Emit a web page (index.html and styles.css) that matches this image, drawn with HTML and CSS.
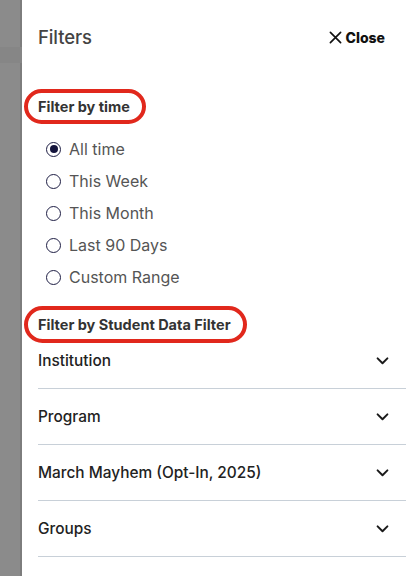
FILE: index.html
```html
<!DOCTYPE html>
<html>
<head>
<meta charset="utf-8">
<link rel="stylesheet" href="styles.css">
</head>
<body>
<div class="page">
  <div class="backdrop"><div class="band"></div></div>
  <aside class="panel">
    <header class="head">
      <h1 class="title">Filters</h1>
      <button class="close">
        <svg class="x" viewBox="0 0 14 14" width="13" height="13"><path d="M1.5 1.5 L12.5 12.5 M12.5 1.5 L1.5 12.5" stroke="#111" stroke-width="1.8" fill="none" stroke-linecap="round"/></svg>
        <span>Close</span>
      </button>
    </header>

    <div class="section-title first"><span>Filter by time</span></div>
    <ul class="radios">
      <li class="radio on"><span class="dot"></span>All time</li>
      <li class="radio"><span class="dot"></span>This Week</li>
      <li class="radio"><span class="dot"></span>This Month</li>
      <li class="radio"><span class="dot"></span>Last 90 Days</li>
      <li class="radio"><span class="dot"></span>Custom Range</li>
    </ul>

    <div class="section-title second"><span>Filter by Student Data Filter</span></div>
    <ul class="acc">
      <li class="acc-item"><span>Institution</span><svg class="chev" viewBox="0 0 14 9" width="13" height="8"><path d="M1.5 1.5 L7 7 L12.5 1.5" stroke="#1a1a1a" stroke-width="2.2" fill="none" stroke-linecap="round" stroke-linejoin="round"/></svg></li>
      <li class="acc-item"><span>Program</span><svg class="chev" viewBox="0 0 14 9" width="13" height="8"><path d="M1.5 1.5 L7 7 L12.5 1.5" stroke="#1a1a1a" stroke-width="2.2" fill="none" stroke-linecap="round" stroke-linejoin="round"/></svg></li>
      <li class="acc-item"><span>March Mayhem (Opt-In, 2025)</span><svg class="chev" viewBox="0 0 14 9" width="13" height="8"><path d="M1.5 1.5 L7 7 L12.5 1.5" stroke="#1a1a1a" stroke-width="2.2" fill="none" stroke-linecap="round" stroke-linejoin="round"/></svg></li>
      <li class="acc-item"><span>Groups</span><svg class="chev" viewBox="0 0 14 9" width="13" height="8"><path d="M1.5 1.5 L7 7 L12.5 1.5" stroke="#1a1a1a" stroke-width="2.2" fill="none" stroke-linecap="round" stroke-linejoin="round"/></svg></li>
    </ul>
  </aside>
</div>
</body>
</html>
```
FILE: styles.css
```css
html, body { margin: 0; padding: 0; }
body { font-family: "Inter", "Noto Sans", sans-serif; background: #fff; }
.page { display: flex; width: 416px; height: 576px; overflow: hidden; }
.backdrop {
  width: 22px; flex: none; background: #8b8b8b;
  padding-top: 47px; box-sizing: border-box;
  box-shadow: inset -2px 0 0 #7d7d7d;
}
.band { height: 16px; background: #868686; }
.panel { flex: 1; padding: 0 10px 0 16px; background: #fff; }
.head {
  height: 74px; display: flex; align-items: center; justify-content: space-between;
  padding-right: 21px;
}
.title { margin: 0; font-size: 18.5px; font-weight: 500; color: #444; letter-spacing: -0.1px; }
.close {
  display: flex; align-items: center; gap: 4px; border: 0; background: none; padding: 0;
  font-family: inherit; font-size: 14px; font-weight: 800; color: #111;
}
.section-title span {
  display: inline-block; margin-left: -14px;
  border: 4px solid #e1281c; border-radius: 20px;
  padding: 5px 12px 5px 10px; line-height: 17px;
  font-size: 14.5px; font-weight: 700; color: #333;
}
.section-title.first { margin-top: 15px; }
.radios { list-style: none; margin: 9px 0 13px; padding: 0; }
.radio {
  height: 32px; display: flex; align-items: center; gap: 8px;
  font-size: 16px; color: #555; padding-left: 8px;
}
.dot {
  width: 13px; height: 13px; border: 1.5px solid #1e1e44; border-radius: 50%;
  box-sizing: content-box; display: flex; align-items: center; justify-content: center;
}
.radio.on .dot::after {
  content: ""; width: 8px; height: 8px; border-radius: 50%; background: #14143c;
}
.section-title.second span { padding-top: 6px; padding-bottom: 6px; }
.section-title.second { margin-bottom: -10px; }
.acc { list-style: none; margin: 0; padding: 0; }
.acc-item {
  height: 55px; border-bottom: 1px solid #c8d0d8;
  display: flex; align-items: center; justify-content: space-between;
  padding-right: 17px; font-size: 15.4px; font-weight: 500; color: #222;
}
.chev { display: block; }
```
